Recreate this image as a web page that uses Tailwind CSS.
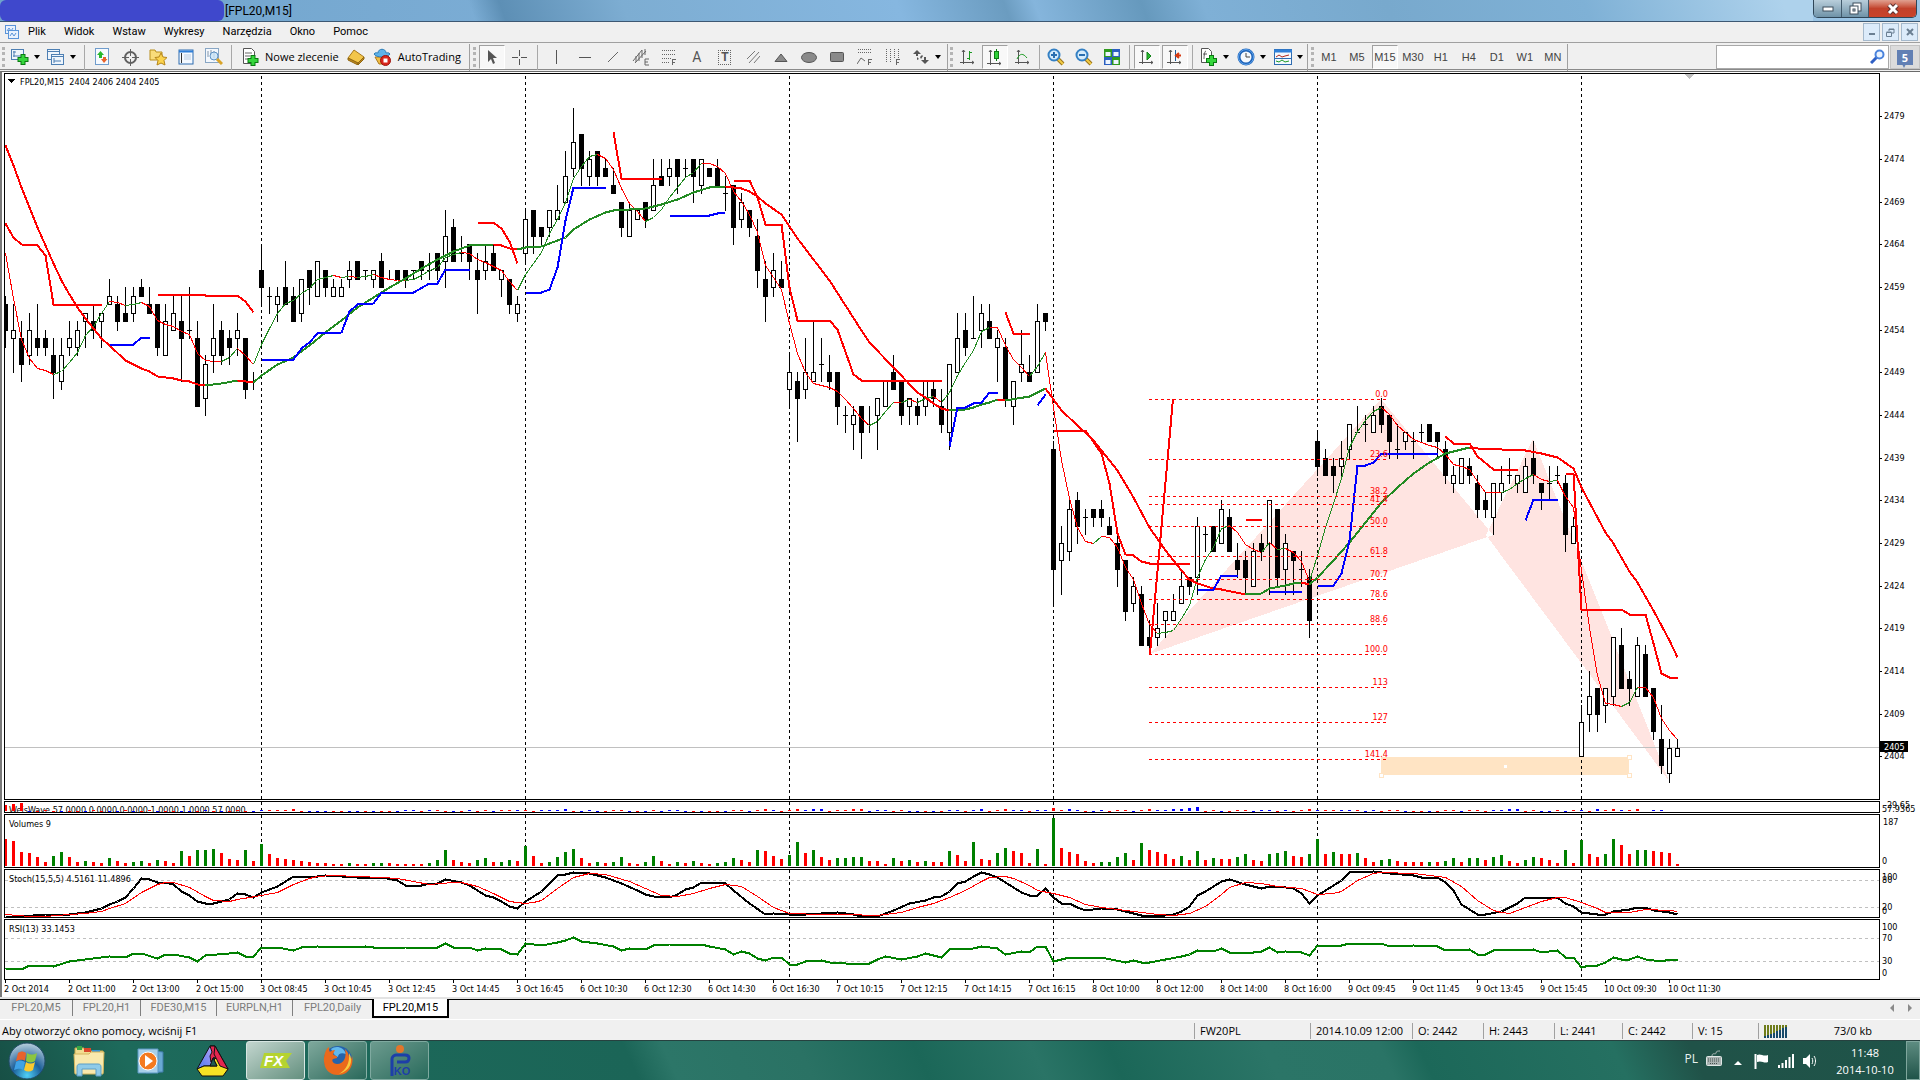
<!DOCTYPE html>
<html lang="pl">
<head>
    <meta charset="UTF-8">
    <meta name="viewport" content="width=device-width, initial-scale=1.0">
    <title>[FPL20,M15]</title>
    <script src="https://cdn.jsdelivr.net/npm/@tailwindcss/browser@4"></script>
</head>
<body class="h-screen flex flex-col overflow-hidden bg-[#f0f0f0] text-black font-['Open_Sans','Noto_Sans',sans-serif] text-[11px] leading-4">

    <!-- Title bar -->
    <header class="h-[22px] shrink-0 flex items-start border-b border-[#3d5873] bg-linear-to-r from-[#6fa3cb] via-[#86b5dd] to-[#9cc6e6]">
        <div class="w-56 h-[21px] rounded-[6px] bg-[#3f48cc]"></div>
        <h1 class="pl-px text-xs leading-[22px] font-['Roboto',sans-serif]">[FPL20,M15]</h1>
        <div class="flex-1 h-[21px] bg-[linear-gradient(70deg,transparent_12%,#5d8fb5_14%,#7dadd2_22%,#86b7e0_40%,#6b9cc0_47%,#85b5dc_49%,#6699bd_56%,#7fb0d6_60%,#78a9cd_72%,#7fb1d6_85%,#aed2ec_98%)]"></div>
        <div class="flex h-[18px] mr-[3px] rounded-b-[5px] border border-t-0 border-[#2f4658] overflow-hidden">
            <button aria-label="Minimalizuj" class="w-7 flex justify-center items-center bg-linear-to-b from-[#b9cedb] to-[#6f93a8] border-r border-[#41596b]">
                <svg width="12" height="6"><rect x="1" y="1" width="10" height="4" fill="#fff" stroke="#3f4f5c"/></svg>
            </button>
            <button aria-label="Przywróć" class="w-[27px] flex justify-center items-center bg-linear-to-b from-[#b9cedb] to-[#6f93a8] border-r border-[#41596b]">
                <svg width="13" height="13" fill="#fff" stroke="#3f4f5c"><rect x="4" y="1" width="8" height="8"/><rect x="1" y="4" width="8" height="8"/><rect x="4" y="7" width="2" height="2"/></svg>
            </button>
            <button aria-label="Zamknij" class="w-[47px] flex justify-center items-center bg-linear-to-b from-[#e0a090] via-[#c2412b] to-[#c9432a]">
                <svg width="14" height="12"><path d="M3 2l8 8M11 2l-8 8" stroke="#5b3030" stroke-width="5"/><path d="M3 2l8 8M11 2l-8 8" stroke="#fff" stroke-width="3"/></svg>
            </button>
        </div>
    </header>

    <!-- Menu -->
    <nav class="h-5 shrink-0 flex items-center bg-[#f0f0f0]">
        <svg class="ml-1 mr-2" width="16" height="16" fill="#e9f2fd" stroke="#5a94d8"><rect x="1.500" y="1.500" width="10" height="8"/><path d="M3 7l2-3 2 3 2-3" fill="none"/><rect x="4.500" y="6.500" width="10" height="8"/><path d="M6 12l2-3 2 3 2-3" fill="none"/></svg>
        <div class="flex gap-[18px] font-['Roboto',sans-serif]">
            <button>Plik</button>
            <button>Widok</button>
            <button>Wstaw</button>
            <button>Wykresy</button>
            <button>Narzędzia</button>
            <button>Okno</button>
            <button>Pomoc</button>
        </div>
        <div class="flex gap-0.5 ml-auto mr-0.5">
            <button aria-label="Minimalizuj wykres" class="w-[17px] h-[18px] flex justify-center items-center border border-[#a5b9cc] bg-[#dcebfa]"><svg width="8" height="8"><path d="M1 6h6" stroke="#6b7f92" stroke-width="2"/></svg></button>
            <button aria-label="Przywróć wykres" class="w-[17px] h-[18px] flex justify-center items-center border border-[#a5b9cc] bg-[#dcebfa]"><svg width="9" height="9" fill="none" stroke="#6b7f92"><path d="M3 3V1h5v4H6M3 1.500h5"/><path d="M.5 4.500h5v4h-5zM.5 4h5"/></svg></button>
            <button aria-label="Zamknij wykres" class="w-[17px] h-[18px] flex justify-center items-center border border-[#a5b9cc] bg-[#dcebfa]"><svg width="8" height="8"><path d="M1 1l6 6M7 1l-6 6" stroke="#6b7f92" stroke-width="2"/></svg></button>
        </div>
    </nav>

    <!-- Toolbars -->
    <div class="h-[28px] shrink-0 flex items-center pt-0.5 border-t border-[#a0a0a0] border-b border-b-[#8a8a8a] bg-[#f0f0f0]">
        <div class="w-1 h-5 ml-0.5 mr-0.5 border-l-[3px] border-dotted border-[#b4b4b4]"></div>
        <button aria-label="Nowy wykres" class="w-9 h-6 pl-[3px] flex items-center gap-[5px]">
            <svg width="18" height="18"><rect x=".5" y="1.500" width="12" height="10" fill="#eef5fc" stroke="#4d7fb3"/><path d="M3 3v6M2 4h3M2 8h8" stroke="#4d7fb3"/><path d="M12 6v11M6.500 11.500h11" stroke="#0a7a12" stroke-width="5"/><path d="M12 7v9M7.500 11.500h9" stroke="#35d63c" stroke-width="3"/></svg>
            <svg width="6" height="4"><path d="M0 0h6L3 4z"/></svg>
        </button>
        <button aria-label="Profile" class="w-[37px] h-6 pl-[3px] flex items-center gap-[5px]">
            <svg width="18" height="18" fill="#eef5fc" stroke="#4d7fb3"><rect x=".5" y="1.500" width="12" height="10"/><path d="M.5 3.500h12"/><rect x="4.500" y="6.500" width="12" height="10"/><path d="M4.500 8.500h12M7 10v5M7 13h7"/></svg>
            <svg width="6" height="4"><path d="M0 0h6L3 4z"/></svg>
        </button>
        <div class="w-px h-[25px] mx-[3px] bg-[#a8a8a8]"></div>
        <button aria-label="Rynek" class="w-7 h-6 flex justify-center items-center"><svg width="14" height="18"><rect x=".5" y=".5" width="13" height="16" fill="#f6faff" stroke="#6f9ccc"/><path d="M5.500 3l3.500 4H7v3H4V7H2z" fill="#27b82d"/><path d="M9 15l3.500-4H11V9H8v2H6z" fill="#e8622a"/></svg></button>
        <button aria-label="Dane" class="w-7 h-6 flex justify-center items-center"><svg width="17" height="17" fill="none" stroke="#606060" stroke-width="2"><circle cx="8.500" cy="8.500" r="5.500"/><path d="M8.500 0v7M8.500 10v7M0 8.500h7M10 8.500h7" stroke-width="1"/></svg></button>
        <button aria-label="Nawigator" class="w-7 h-6 flex justify-center items-center"><svg width="18" height="18"><path d="M1 2h5l1 2h6v8H1z" fill="#f9dc7a" stroke="#b98f1c"/><path d="M12 5l2 4 4 .5-3 3 1 4.500-4-2-4 2 1-4.500-3-3 4-.5z" fill="#fbd34d" stroke="#b5851a"/></svg></button>
        <button aria-label="Terminal" class="w-7 h-6 flex justify-center items-center"><svg width="16" height="16"><rect x="1" y="1" width="14" height="14" fill="#f4f9ff" stroke="#2e6cb0"/><path d="M1 2.500h14" stroke="#2f7fd8" stroke-width="2"/><path d="M3.500 4v10" stroke="#303030"/><path d="M6 6h7M6 8h7M6 10h7" stroke="#b9cbe0"/></svg></button>
        <button aria-label="Tester" class="w-7 h-6 flex justify-center items-center"><svg width="18" height="18"><rect x=".5" y=".5" width="13" height="14" fill="#f4f8fd" stroke="#88a6c4"/><path d="M3 3v6M6 2v5M9 3v7" stroke="#8296aa"/><circle cx="9" cy="8" r="4" fill="#c9e3f8cc" stroke="#5f92c4"/><path d="M12 11l5 5" stroke="#d9a429" stroke-width="3"/></svg></button>
        <div class="w-px h-[25px] mx-[3px] bg-[#a8a8a8]"></div>
        <button class="h-6 pl-[7px] flex items-center gap-1.5">
            <svg width="17" height="18"><path d="M1.500.5h8l3 3v12h-11z" fill="#fff" stroke="#555"/><path d="M3 5h7M3 8h5M3 11h4" stroke="#666"/><path d="M11 7v11M5.500 12.500h11" stroke="#0a7a12" stroke-width="5"/><path d="M11 8v9M6.500 12.500h9" stroke="#35d63c" stroke-width="3"/></svg>
            <span>Nowe zlecenie</span>
        </button>
        <button aria-label="MetaEditor" class="w-7 h-6 ml-[3px] flex justify-center items-center"><svg width="18" height="16"><path d="M1 9l6-8 10 7-6 6z" fill="#f3c64a" stroke="#a9791b"/><path d="M1 9v2l10 5v-2zM11 16l6-6V8l-6 6z" fill="#c08a1e" stroke="#8f6611"/></svg></button>
        <button class="h-6 ml-[3px] flex items-center gap-[7px]">
            <svg width="18" height="18"><path d="M2 9h14l-3 7H6z" fill="#f2bd42" stroke="#a9791b"/><path d="M1 6c2 4 14 4 16 0-1-2-4-1-4-1 0-5-8-5-8 0 0 0-3-1-4 1z" fill="#5fb2e8" stroke="#2c7db8"/><circle cx="12.500" cy="12.500" r="5" fill="#d8261c" stroke="#9c130c"/><rect x="10.500" y="10.500" width="4" height="4" fill="#fff"/></svg>
            <span>AutoTrading</span>
        </button>
        <div class="w-px h-[27px] ml-2 mr-[3px] bg-[#a0a0a0]"></div>
        <div class="w-1 h-5 border-l-[3px] border-dotted border-[#b4b4b4]"></div>
        <button aria-label="Kursor" class="w-[26px] h-6 ml-[2px] mr-px flex justify-center items-center border border-[#a0a0a0] border-r-white border-b-white bg-[#f8f8f8]"><svg width="10" height="16"><path d="M1 1v12l3-3 2 5 2-1-2-5h4z" fill="#555"/></svg></button>
        <button aria-label="Krzyż" class="w-7 h-6 flex justify-center items-center"><svg width="15" height="15" stroke="#555"><path d="M7.500 0v6M7.500 9v6M0 7.500h6M9 7.500h6"/></svg></button>
        <div class="w-px h-[25px] ml-[3px] mr-1 bg-[#a8a8a8]"></div>
        <button aria-label="Linia pionowa" class="w-7 h-6 ml-px flex justify-center items-center"><svg width="3" height="14" stroke="#555"><path d="M1.500 0v14"/></svg></button>
        <button aria-label="Linia pozioma" class="w-7 h-6 flex justify-center items-center"><svg width="12" height="3" stroke="#555"><path d="M0 1.500h12"/></svg></button>
        <button aria-label="Linia trendu" class="w-7 h-6 flex justify-center items-center"><svg width="12" height="12" stroke="#666"><path d="M1 11L11 1"/></svg></button>
        <button aria-label="Kanał" class="w-7 h-6 flex justify-center items-center"><svg width="18" height="18" stroke="#666"><path d="M1 13L10 2M3 15L14 3M4 8v6M7 5v8M10 2v8M13 1v6"/><path d="M17 11h-4v6h4M13 14h3" fill="none"/></svg></button>
        <button aria-label="Fibonacci" class="w-7 h-6 flex justify-center items-center"><svg width="16" height="18" stroke="#666"><path d="M1 2.500h14M1 6.500h14M1 10.500h9M1 14.500h7" stroke-dasharray="1 1"/><path d="M15 11.500h-4M11.500 11v6M11 14.500h3" fill="none"/></svg></button>
        <button class="w-7 h-6 text-center text-sm text-[#555] font-['Roboto',sans-serif]">A</button>
        <button class="w-7 h-6 flex justify-center items-center text-[#555]"><span class="w-[13px] h-[15px] border border-dotted border-[#666] text-xs leading-[13px] font-bold text-center font-['Liberation_Sans',sans-serif]">T</span></button>
        <button aria-label="Linie równoległe" class="w-7 h-6 flex justify-center items-center"><svg width="14" height="14" stroke="#777"><path d="M1 9L9 1M3 13L13 2M8 13l6-7"/></svg></button>
        <button aria-label="Trójkąt" class="w-7 h-6 flex justify-center items-center"><svg width="14" height="9"><path d="M1 8.500L7 1l6 7.500z" fill="#8a8a8a" stroke="#555"/></svg></button>
        <button aria-label="Elipsa" class="w-7 h-6 flex justify-center items-center"><svg width="16" height="11"><ellipse cx="8" cy="5.500" rx="7.500" ry="5" fill="#8a8a8a" stroke="#555"/></svg></button>
        <button aria-label="Prostokąt" class="w-7 h-6 flex justify-center items-center"><svg width="14" height="10"><rect x=".5" y=".5" width="13" height="9" rx="1" fill="#8a8a8a" stroke="#555"/></svg></button>
        <button aria-label="Wachlarz" class="w-7 h-6 flex justify-center items-center"><svg width="16" height="18" stroke="#666" fill="none"><path d="M1 1.500h14M1 4.500h14" stroke-dasharray="1 1"/><path d="M0 16l4-6 4 3M15 11.500h-4M11.500 11v6M11 14.500h3"/></svg></button>
        <button aria-label="Strefy" class="w-7 h-6 flex justify-center items-center"><svg width="15" height="18" stroke="#666" fill="none"><path d="M1.500 1v14M5.500 1v14M9.500 1v9M13.500 1v9" stroke-dasharray="1 1"/><path d="M15 11.500h-4M11.500 11v6M11 14.500h3"/></svg></button>
        <button aria-label="Strzałki" class="w-10 h-6 pl-[6px] flex items-center gap-1.5">
            <svg width="16" height="14" fill="#555"><path d="M4 0l4 4H5v2H3V4H0zM7 7l2-2 1 1-2 3zM12 14l-4-4h3V7h2v3h3zM4 7l2 2-2 1z"/></svg>
            <svg width="6" height="4"><path d="M0 0h6L3 4z" fill="#000"/></svg>
        </button>
        <div class="w-px h-[27px] mr-0.5 bg-[#a0a0a0]"></div>
        <div class="w-1 h-5 border-l-[3px] border-dotted border-[#b4b4b4]"></div>
        <button aria-label="Słupki" class="w-[27px] h-6 flex justify-center items-center"><svg width="15" height="16" fill="none" stroke="#555"><path d="M3.500 1v14M0 13.500h14M2 3l1.500-2L5 3M12 12l2 1.500-2 1.500"/><path d="M9.500 2v9M7 9.500h2M10 3.500h2" stroke="#1b9a22"/></svg></button>
        <button aria-label="Świece" class="w-[26px] h-6 mx-px flex justify-center items-center border border-[#a0a0a0] border-r-white border-b-white bg-[#f8f8f8]"><svg width="15" height="17" fill="none" stroke="#555"><path d="M3.500 1v15M0 14.500h14M2 3l1.500-2L5 3M12 13l2 1.500-2 1.500"/><path d="M9.500 0v12" stroke="#0d7d14"/><rect x="7.500" y="2.500" width="4" height="7" fill="#2fd038" stroke="#0d7d14"/></svg></button>
        <button aria-label="Linia" class="w-7 h-6 flex justify-center items-center"><svg width="15" height="16" fill="none" stroke="#555"><path d="M3.500 1v14M0 13.500h14M2 3l1.500-2L5 3M12 12l2 1.500-2 1.500"/><path d="M2 10c3-6 6-6 10-1" stroke="#1b9a22"/></svg></button>
        <div class="w-px h-[25px] mx-[2px] bg-[#a8a8a8]"></div>
        <button aria-label="Powiększ" class="w-7 h-6 flex justify-center items-center"><svg width="18" height="18"><path d="M10 10l6 6" stroke="#9a741b" stroke-width="4"/><path d="M10 10l6 6" stroke="#f2cc45" stroke-width="2"/><circle cx="7" cy="7" r="5.500" fill="#d6ecfb" stroke="#3480c4" stroke-width="2"/><path d="M7 4v6M4 7h6" stroke="#2a6fb0" stroke-width="2"/></svg></button>
        <button aria-label="Pomniejsz" class="w-7 h-6 flex justify-center items-center"><svg width="18" height="18"><path d="M10 10l6 6" stroke="#9a741b" stroke-width="4"/><path d="M10 10l6 6" stroke="#f2cc45" stroke-width="2"/><circle cx="7" cy="7" r="5.500" fill="#d6ecfb" stroke="#3480c4" stroke-width="2"/><path d="M4 7h6" stroke="#2a6fb0" stroke-width="2"/></svg></button>
        <button aria-label="Kafelki" class="w-7 h-6 flex justify-center items-center"><svg width="16" height="16"><path d="M0 0h8v8H0zM8 8h8v8H8z" fill="#2f9a1e"/><path d="M8 0h8v8H8zM0 8h8v8H0z" fill="#2b5fc0"/><path d="M1.500 3h5v4h-5zM9.500 3h5v4h-5zM1.500 11h5v4h-5zM9.500 11h5v4h-5z" fill="#eef6ff"/></svg></button>
        <div class="w-px h-[25px] mx-[3px] bg-[#a8a8a8]"></div>
        <button aria-label="Autoprzewijanie" class="w-[26px] h-6 mx-px flex justify-center items-center border border-[#a0a0a0] border-r-white border-b-white bg-[#f8f8f8]"><svg width="15" height="16" fill="none" stroke="#555"><path d="M3.500 1v14M0 13.500h14M2 3l1.500-2L5 3M12 12l2 1.500-2 1.500"/><path d="M8 3l4 4-4 4z" fill="#28b82e" stroke="#118217"/></svg></button>
        <button aria-label="Przesunięcie" class="w-[26px] h-6 mx-px flex justify-center items-center border border-[#a0a0a0] border-r-white border-b-white bg-[#f8f8f8]"><svg width="15" height="16" fill="none" stroke="#555"><path d="M3.500 1v14M0 13.500h14M2 3l1.500-2L5 3M12 12l2 1.500-2 1.500"/><path d="M8.500 1v11" stroke="#1c5c9c"/><path d="M14 6.500H9M12 4L9 6.500 12 9" stroke="#d63a12" stroke-width="2"/></svg></button>
        <div class="w-px h-[25px] mx-[3px] bg-[#a8a8a8]"></div>
        <button aria-label="Wskaźniki" class="w-[37px] h-6 pl-1 flex items-center gap-[5px]">
            <svg width="18" height="18"><path d="M1.500.5h7l3 3v11h-10z" fill="#fff" stroke="#555"/><path d="M6 3c-2 0-2 8-2 8M3 6h4" stroke="#555" fill="none"/><path d="M11.500 7v11M6 12.500h11" stroke="#0a7a12" stroke-width="5"/><path d="M11.500 8v9M7 12.500h9" stroke="#35d63c" stroke-width="3"/></svg>
            <svg width="6" height="4"><path d="M0 0h6L3 4z"/></svg>
        </button>
        <button aria-label="Okresy" class="w-[37px] h-6 pl-1 flex items-center gap-[5px]">
            <svg width="18" height="18"><circle cx="9" cy="9" r="7" fill="#f4f8fd" stroke="#1d62b8" stroke-width="3"/><circle cx="9" cy="9" r="7.500" fill="none" stroke="#5fa4ec"/><path d="M9 5v4h4" fill="none" stroke="#444"/></svg>
            <svg width="6" height="4"><path d="M0 0h6L3 4z"/></svg>
        </button>
        <button aria-label="Szablony" class="w-[37px] h-6 pl-1 flex items-center gap-[5px]">
            <svg width="18" height="16"><rect x=".5" y=".5" width="17" height="15" fill="#f4f9ff" stroke="#2e6cb0"/><path d="M0 2h18" stroke="#2f7fd8" stroke-width="3"/><path d="M2 8l3-2 3 2 3-1 4-1" stroke="#b3281c" fill="none"/><path d="M0 9.500h18" stroke="#2e6cb0"/><path d="M2 12l3 1 3-2 3 2 4-1" stroke="#1b9a22" fill="none"/></svg>
            <svg width="6" height="4"><path d="M0 0h6L3 4z"/></svg>
        </button>
        <div class="w-px h-[27px] mr-[3px] bg-[#a0a0a0]"></div>
        <div class="w-1 h-5 border-l-[3px] border-dotted border-[#b4b4b4]"></div>
        <div class="flex text-[#444] font-['Liberation_Sans',sans-serif]">
            <button class="w-7 h-6">M1</button>
            <button class="w-7 h-6">M5</button>
            <button class="w-[26px] h-6 mx-px border border-[#a0a0a0] border-r-white border-b-white bg-[#f8f8f8]">M15</button>
            <button class="w-7 h-6">M30</button>
            <button class="w-7 h-6">H1</button>
            <button class="w-7 h-6">H4</button>
            <button class="w-7 h-6">D1</button>
            <button class="w-7 h-6">W1</button>
            <button class="w-7 h-6">MN</button>
        </div>
        <div class="w-px h-[27px] bg-[#a0a0a0]"></div>
        <div class="relative ml-auto">
            <input aria-label="Szukaj" type="text" class="block w-[173px] h-6 bg-white border border-[#a9a9a9] pl-1 pr-6">
            <svg class="absolute right-1 top-1" width="15" height="15"><path d="M7 8l-6 6" stroke="#2f5fc4" stroke-width="3"/><circle cx="9.500" cy="5.500" r="4" fill="#eaf3ff" stroke="#4a83dc" stroke-width="2"/></svg>
        </div>
        <button aria-label="Wiadomości" class="w-[30px] h-6 ml-px flex justify-center items-center bg-[#dcdcdc] border border-[#c4c4c4]">
            <span class="relative w-4 h-[15px] bg-[#6280b4] text-white text-[11px] leading-[15px] font-bold text-center">5<svg class="absolute left-1 top-3" width="6" height="6"><path d="M0 0h6L3 6z" fill="#6280b4"/></svg></span>
        </button>
    </div>

    <!-- Chart window -->
    <main class="flex-1 min-h-0 flex flex-col mt-px pt-px pl-0.5 border-l-2 border-l-[#7a7a7a] border-t border-t-[#6a6a6a] bg-white font-['DejaVu_Sans_Condensed','Noto_Sans',sans-serif]">
        <div class="flex-1 min-h-0 flex flex-col gap-px">
            <section class="flex-1 min-h-0 flex">
                <svg id="price" class="flex-1 min-w-0 h-full border border-black" shape-rendering="crispEdges"></svg>
                <svg id="priceAxis" class="w-10 h-full shrink-0"></svg>
            </section>
            <section class="h-3 shrink-0 flex">
                <svg id="weis" class="flex-1 min-w-0 h-full border border-black" shape-rendering="crispEdges"></svg>
                <svg id="weisAxis" class="w-10 h-full shrink-0 overflow-visible"></svg>
            </section>
            <section class="h-[54px] shrink-0 flex">
                <svg id="volume" class="flex-1 min-w-0 h-full border border-black" shape-rendering="crispEdges"></svg>
                <svg id="volumeAxis" class="w-10 h-full shrink-0 overflow-visible"></svg>
            </section>
            <section class="h-[49px] shrink-0 flex">
                <svg id="stoch" class="flex-1 min-w-0 h-full border border-black" shape-rendering="crispEdges"></svg>
                <svg id="stochAxis" class="w-10 h-full shrink-0 overflow-visible"></svg>
            </section>
            <section class="h-[61px] shrink-0 flex">
                <svg id="rsi" class="flex-1 min-w-0 h-full border border-black" shape-rendering="crispEdges"></svg>
                <svg id="rsiAxis" class="w-10 h-full shrink-0"></svg>
            </section>
        </div>
        <svg id="timeAxis" class="w-full h-[17px] shrink-0"></svg>
    </main>

    <!-- Chart tabs -->
    <div class="h-[22px] shrink-0 flex items-start border-t-2 border-t-[#e3e3e3]">
        <div class="flex-1 h-5 flex items-start border-t border-black text-[#7b7b7b] font-['Roboto',sans-serif]">
            <button class="w-[73px] h-4 border-r border-[#808080]">FPL20,M5</button>
            <button class="w-[68px] h-4 border-r border-[#808080]">FPL20,H1</button>
            <button class="w-[76px] h-4 border-r border-[#808080]">FDE30,M15</button>
            <button class="w-[76px] h-4 border-r border-[#808080]">EURPLN,H1</button>
            <button class="w-[79px] h-4">FPL20,Daily</button>
            <button class="w-[77px] h-[19px] -mt-px bg-white border-2 border-t-0 border-black text-black">FPL20,M15</button>
            <div class="ml-auto mr-2 mt-1 flex gap-3">
                <button aria-label="Poprzednia"><svg width="5" height="8"><path d="M4 0v8L0 4z" fill="#8a8a8a"/></svg></button>
                <button aria-label="Następna"><svg width="5" height="8"><path d="M1 0v8l4-4z" fill="#8a8a8a"/></svg></button>
            </div>
        </div>
    </div>

    <!-- Status bar -->
    <footer class="h-[21px] shrink-0 flex items-center pt-0.5 border-t border-white">
        <div class="flex-1 pl-0.5">Aby otworzyć okno pomocy, wciśnij F1</div>
        <div class="w-[116px] pl-[5px] border-l border-[#a0a0a0]">FW20PL</div>
        <div class="w-[102px] pl-[5px] border-l border-[#a0a0a0] whitespace-nowrap">2014.10.09 12:00</div>
        <div class="w-[71px] pl-[5px] border-l border-[#a0a0a0]">O: 2442</div>
        <div class="w-[71px] pl-[5px] border-l border-[#a0a0a0]">H: 2443</div>
        <div class="w-[68px] pl-[5px] border-l border-[#a0a0a0]">L: 2441</div>
        <div class="w-[70px] pl-[5px] border-l border-[#a0a0a0]">C: 2442</div>
        <div class="w-[66px] pl-[5px] border-l border-[#a0a0a0]">V: 15</div>
        <div class="w-[162px] pl-[5px] pr-12 flex justify-between border-l border-[#a0a0a0]">
            <svg class="mt-0.5" width="24" height="13" shape-rendering="crispEdges"><path d="M1 0v11M4 0v10M7 0v9M10 0v8M13 0v6M16 0v5M19 0v3M22 0v2" stroke="#6f7d1b" stroke-width="2"/><path d="M1 11v2M4 10v3M7 9v4M10 8v5M13 6v7M16 5v8M19 3v10M22 2v11" stroke="#174a6b" stroke-width="2"/></svg>
            <span>73/0 kb</span>
        </div>
    </footer>

    <!-- Taskbar -->
    <div class="h-10 shrink-0 flex items-stretch border-t border-t-[#26413f] text-white bg-[linear-gradient(65deg,#174f45_0%,#1d6a5b_7%,#1b6557_33%,#2c7668_35%,#2a7264_42%,#1b6758_48%,#2a7466_54%,#1b6758_58%,#2b7567_66%,#2a7466_72%,#1c6859_74%,#257061_84%,#205248_88%,#1f5449_100%)]">
        <button aria-label="Start" class="w-[54px] flex justify-center items-center">
            <svg width="38" height="38"><defs><radialGradient id="orb" cx=".5" cy=".9" r=".9"><stop offset="0" stop-color="#4fd0f5"/><stop offset=".45" stop-color="#1c5f9a"/><stop offset="1" stop-color="#b9cfdc"/></radialGradient></defs><circle cx="19" cy="19" r="18" fill="url(#orb)" stroke="#204b66"/><path d="M10 11c3-2 5-2 8 0l-1 8c-3-2-5-1-9 0z" fill="#e8622c"/><path d="M19 11c3 2 6 2 10 0l-2 8c-3 2-6 2-9 0z" fill="#8cc63f"/><path d="M8 20c3-2 5-2 9 0l-2 8c-3-2-5-1-9 0z" fill="#3fa2e6"/><path d="M18 20c3 2 6 2 9 0l-2 8c-3 2-6 2-9 0z" fill="#fbc92e"/></svg>
        </button>
        <button aria-label="Eksplorator" class="w-[69px] flex justify-center items-center">
            <svg width="34" height="32"><path d="M3 3h9l2 3h17v22H3z" fill="#f2dd90" stroke="#c8a94d"/><path d="M5 1h5v4H5z" fill="#39a845"/><path d="M12 3h7v4h-7z" fill="#d9482b"/><path d="M20 5h8v4h-8z" fill="#3b93d4"/><path d="M2 9h15l2-2h13l-1 22H3z" fill="#f8e9ad" stroke="#d4b65e"/><path d="M5 31v-9c0-2 1-3 3-3h18c2 0 3 1 3 3v9h-5v-7H10v7z" fill="#8fcbe9" stroke="#5c9ec6"/></svg>
        </button>
        <button aria-label="Odtwarzacz" class="w-14 flex justify-center items-center">
            <svg width="28" height="28"><path d="M9 3l17 2v20l-17 1z" fill="#6aa9d4" stroke="#3f7ba8"/><path d="M1 2h20v24H1z" fill="#a8d0ea" stroke="#5b98c4"/><circle cx="11" cy="14" r="9" fill="#f47a1f" stroke="#fff"/><path d="M8 8l8 6-8 6z" fill="#fff"/></svg>
        </button>
        <button aria-label="Program" class="w-[67px] flex justify-center items-center">
            <svg width="34" height="32"><defs><linearGradient id="edge" x1="0" y1="1" x2="1" y2="0"><stop offset="0" stop-color="#4a78f0"/><stop offset="1" stop-color="#c9a9f7"/></linearGradient></defs><path d="M14 1h5l4 9-4 3-4 8H8l-7 3z" fill="url(#edge)" stroke="#111"/><path d="M14 1h5l13 23-5 6-9-18-3 5-1-6 2-4z" fill="#e5264f" stroke="#111"/><path d="M1 24l7-3h13l-3-6 3-3 11 12-5 7H6z" fill="#f5e324" stroke="#111"/><path d="M19 1l13 23-8-3-6-12z" fill="#e5264f" stroke="#111"/><path d="M17 13l4 8h-7z" fill="#1f5d51" stroke="#111"/></svg>
        </button>
        <button aria-label="FX" class="w-[59px] flex justify-center items-center rounded-[3px] border border-[#d7e6e2] bg-linear-to-br from-[#c3d6cf] to-[#64907f]">
            <svg width="32" height="16"><path d="M4 0h28l-6 8 4 7H0z" fill="#b5d330"/><text x="4" y="13" font-family="Liberation Sans" font-size="15" font-weight="bold" font-style="italic" fill="#fff">FX</text></svg>
        </button>
        <button aria-label="Firefox" class="w-[59px] ml-[3px] flex justify-center items-center rounded-[3px] border border-[#86b0a6] bg-linear-to-br from-[#7ea89c] to-[#28695b]">
            <svg width="32" height="34"><circle cx="16" cy="16" r="14" fill="#2563ab"/><path d="M9 5c5-4 13-2 15 5-5-2-8 0-8 3-3-1-5-4-7-8z" fill="#62b8ec"/><path d="M3 9c-3 9 0 22 13 22 12 0 16-11 14-19-1 4-2 5-3 5 1-6-2-10-4-12 2 8-1 15-8 15-3 0-6-3-4-5l4-1c1-3-4-2-4-4l2-4c-3 0-4 1-5 2-1-1-1-4-1-5-2 1-3 3-4 6z" fill="#ea6a1c"/><path d="M27 9c5 8 1 18-10 21 7-4 11-11 10-21z" fill="#f9c93c"/></svg>
        </button>
        <button aria-label="PKO" class="w-[59px] ml-[3px] flex flex-col items-center rounded-[3px] border border-[#7faaa0] bg-linear-to-br from-[#6c9b8f] to-[#276b5c]">
            <svg width="24" height="36"><circle cx="12" cy="7" r="4" fill="#e2762a"/><path d="M4 34V17c0-2 2-4 4-4h9c3 0 4 1 4 3s-1 4-4 4H9" fill="none" stroke="#1d3fa8" stroke-width="3"/><text x="14" y="33" text-anchor="middle" font-family="Liberation Sans" font-size="11" font-weight="bold" fill="#1d3fa8">KO</text></svg>
        </button>
        <div class="ml-auto flex items-center text-xs">
            <span class="mb-1 mr-2 text-[#e8f2f0]">PL</span>
            <button aria-label="Klawiatura" class="mb-1 w-4"><svg width="16" height="17"><path d="M6 6c0-4 4-1 4-3s2-2 4-2" stroke="#a9b6b4" fill="none"/><rect x=".5" y="6.500" width="15" height="9" rx="1" fill="#aab3b2" stroke="#dfe7e5"/><path d="M2 9h12M2 11h12M4 13.500h8" stroke="#44524f" stroke-dasharray="1 1"/></svg></button>
            <button aria-label="Pokaż ukryte ikony" class="ml-3 mt-1"><svg width="8" height="5"><path d="M0 5l4-4 4 4z" fill="#fff"/></svg></button>
            <button aria-label="Centrum akcji" class="ml-3"><svg width="16" height="18"><path d="M1.500 2v15" stroke="#fff" stroke-width="2"/><path d="M3 3c4-2 6 2 11 0v7c-4 2-6-2-11 0z" fill="#fff"/></svg></button>
            <button aria-label="Sieć" class="ml-2"><svg width="16" height="14" fill="#fff"><path d="M0 11h2v3H0zM3.500 9h2v5h-2zM7 6h2v8H7zM10.500 3h2v11h-2zM14 0h2v14h-2z"/></svg></button>
            <button aria-label="Głośność" class="ml-2"><svg width="16" height="16"><path d="M1 5h3l4-4v14l-4-4H1z" fill="#fff"/><path d="M10 5c1 2 1 4 0 6M12 3c2 3 2 7 0 10" stroke="#fff" fill="none"/></svg></button>
            <div class="w-[82px] ml-1.5 text-center text-[11px] leading-[17px]">11:48<br>2014-10-10</div>
        </div>
        <button aria-label="Pokaż pulpit" class="w-3.5 border border-[#7fa69d] bg-linear-to-b from-[#5d8c81] to-[#1f5449]"></button>
    </div>

    <script>
        // drawing units are screen pixels, bars are 8px apart starting at x = 5
        const X = i => 5 + i * 8;
        const Y = p => Math.round(415 + (2444 - p) * 8.53);
        const DAYS = [32, 65, 98, 131, 164, 197];

        // high low open close, counted from 2400
        const candles = `58 52 57 54|57 49 53 54|55 48 53 50|56 50 51 54|57 51 53 52|54 51 53 52|53 46 51 49|53 47 48 51|55 51 52 53|55 51 52 54
56 52 55 56|57 53 55 54|56 52 55 56|60 57 57 58|58 54 57 55|59 55 56 55|59 55 56 58|60 58 59 58|59 56 57 56|57 51 57 52
57 51 51 55|58 54 54 56|58 48 55 53|59 53 54 54|55 45 53 45|51 44 46 50|57 49 51 53|55 50 54 51|54 50 53 52|56 51 53 54
53 46 53 47|49 47 48 48|64 57 61 59|59 56 58 58|59 55 57 58|62 57 59 57|59 55 58 55|60 55 56 60|61 57 61 59|62 58 58 62
61 58 61 59|60 58 58 59|60 58 58 59|62 59 60 61|62 60 62 60|61 60 61 61|61 59 60 61|63 59 62 59|61 60 60 60|61 60 61 60
61 59 61 60|61 60 61 61|62 60 62 61|63 60 61 61|63 60 63 61|68 59 62 65|67 62 66 62|65 62 63 63|64 60 64 62|63 56 61 60
64 60 61 62|64 61 63 61|61 58 60 61|60 56 60 57|58 55 56 57|68 62 63 67|68 63 68 65|66 64 66 65|68 65 66 68|71 67 67 68
75 69 69 72|80 72 73 76|77 71 77 73|75 71 72 74|75 71 75 72|74 72 73 72|73 70 71 70|69 65 69 66|69 65 65 68|68 67 67 68
69 66 69 67|74 68 68 71|74 71 72 71|74 71 72 73|74 70 74 72|74 72 73 73|74 69 74 72|74 70 71 74|73 72 73 72|74 71 73 71
72 68 70 70|71 64 71 66|70 66 67 69|68 65 68 66|67 59 65 61|62 55 60 58|63 58 59 61|62 59 60 59|51 45 47 49|49 41 48 46
53 46 47 49|55 48 48 49|53 48 50 50|51 47 49 48|49 43 49 45|45 42 44 44|45 40 43 44|45 39 45 42|45 42 43 43|46 40 44 46
48 45 45 48|51 47 49 47|48 43 48 44|46 43 45 46|46 43 45 44|48 44 45 48|48 45 47 46|47 42 45 43|50 40 42 50|56 49 49 53
56 51 54 52|58 53 53 53|57 52 54 56|57 53 55 53|54 48 52 53|53 45 52 46|48 43 45 48|54 48 49 50|51 48 49 48|57 49 49 55
56 54 56 55|41 22 40 26|31 23 27 29|34 27 28 33|35 29 34 31|33 30 32 32|33 31 33 32|34 31 33 32|32 30 31 30|30 24 29 26
27 20 27 21|25 21 22 24|24 17 23 17|20 16 18 17|22 17 18 19|21 18 20 21|23 20 20 21|26 22 22 24|25 23 25 24|32 23 25 31
31 28 30 30|31 28 31 28|34 29 29 33|33 28 32 28|29 25 27 26|28 23 27 25|29 24 24 28|30 27 29 28|34 23 29 34|33 24 33 25
30 23 26 29|28 23 28 27|28 24 26 26|26 18 25 20|42 37 41 38|40 37 39 37|39 35 38 37|41 37 38 39|43 39 40 43|45 42 42 42
44 41 43 43|45 42 42 44|46 42 45 43|44 39 44 41|43 39 40 40|42 40 41 42|42 39 41 41|43 41 42 42|43 41 43 41|42 39 42 41
41 36 40 37|38 35 36 37|39 36 36 39|39 36 38 37|37 32 36 33|35 32 34 33|36 30 32 36|38 34 35 36|39 36 37 37|37 35 36 37
39 35 35 38|41 36 39 37|36 33 36 35|38 34 36 36|38 36 37 37|37 28 36 30|32 29 29 31|10 4 4 8|14 7 9 11|12 7 12 9
12 8 10 12|18 10 11 18|19 12 17 12|14 10 13 12|18 11 11 17|17 11 16 11|12 6 12 7|10 2 6 3|6 1 2 5|6 4 4 5`
            .split(/[|\n]/).map(c => c.trim().split(" ").map(v => 2400 + Number(v)));

        // one y per bar
        const fast = [253,298,339,358,368,370,374,371,362,352,335,326,313,301,302,305,304,302,306,320,324,326,331,334,353,360,361,361,357,348,
            355,364,344,328,313,303,300,293,288,279,277,275,277,276,277,276,274,277,279,280,280,279,275,270,267,257,254,252,253,259,
            262,266,270,281,290,274,263,252,233,219,202,178,166,156,154,158,169,188,203,211,221,217,209,197,187,177,172,163,163,166,
            173,191,201,214,232,265,277,289,323,353,372,383,385,387,391,399,408,418,425,421,411,402,402,399,402,398,396,402,392,375,
            362,350,331,327,327,345,359,367,376,366,352,407,460,498,527,541,543,536,537,547,567,579,603,624,633,632,630,618,605,577,
            559,547,528,525,532,544,549,552,542,549,548,552,561,581,555,527,503,478,447,431,420,411,407,414,425,432,439,442,445,447,
            454,464,466,469,481,492,492,492,489,483,478,474,479,481,480,496,507,570,627,675,703,704,706,702,687,687,697,718,730,739]
            .map((y, i) => [i, y]);

        const slow = pairs("0 145 1 165 2 187 3 207 4 227 5 245 6 263 7 280 8 294 9 307 10 318 11 328 12 338 13 345 15 360 17 368 18 371 19 376 21 378 22 380 23 381 24 384 25 385 26 384 27 383 29 380 30 381 31 382 32 375 34 364 36 357 38 345 40 332 42 320 44 307 46 297 48 287 50 278 52 268 54 259 56 251 57 248 58 245 61 244 62 245 63 248 64 249 65 247 67 246 69 240 70 237 71 229 73 219 75 212 76 210 78 209 80 208 82 204 84 199 86 192 88 187 90 186 91 187 92 188 93 191 94 196 95 203 97 214 98 226 99 238 101 259 103 280 105 305 107 330 108 342 111 367 114 392 115 397 116 403 117 408 118 410 120 409 121 407 122 404 123 402 124 399 125 400 128 396 130 388 131 399 132 410 134 425 136 440 138 460 139 470 141 497 143 527 145 550 147 570 148 579 149 583 151 588 152 589 155 594 157 593 158 588 160 585 161 583 162 582 163 584 164 577 166 560 168 542 170 522 172 502 174 487 176 473 178 462 180 453 182 449 183 447 184 448 187 449 190 450 192 453 194 457 196 468 197 487 199 517 200 532 201 543 203 571 204 582 206 610 208 640 209 657");

        const redSteps = ["0 223 1 237 2 244 4 245 5 255 6 304 12 304", "19 294 24 294 25 295 29 295 30 301 31 312", "59 222 61 222 62 228 63 241 64 263",
            "76 132 77 178 82 178", "91 180 93 180 94 197 95 224 97 224 98 287 99 320 103 320 104 329 106 374 107 380 117 380", "125 312 126 333 128 333",
            "131 430 135 430 137 453 138 483 139 533 140 554 141 555 142 561 143 563 148 563", "155 519 157 519", "180 436 181 443 183 443 184 456 186 469 189 469",
            "195 473 196 473 197 609 202 609 203 614 205 614 206 643 207 673 208 677 209 677"];
        const blueSteps = ["13 344 16 344 17 337 18 337", "32 359 36 359 37 348 38 342 39 333 42 332 43 311 44 304 46 303 47 292 51 292 53 283 54 283 55 269 58 269",
            "65 292 67 292 68 289 69 267 70 220 71 187 75 187", "83 215 88 215 89 213 90 212", "118 446 119 407 120 407 121 403 122 402 123 392 124 392", "129 405 130 394",
            "149 589 151 589 152 575 154 575", "158 591 162 591", "164 585 166 585 167 573 168 540 169 465 170 465 171 462 172 453 179 453", "190 520 191 499 194 499"];

        const volumes = "R27 R25 R14 R13 R9 R4 G10 G14 R9 R4 G5 R4 R3 G8 R5 R3 G4 G5 R3 G6 R5 R3 G15 R10 G16 G16 G17 R13 R7 R6 G16 R5 G22 R12 R8 R7 R6 R5 R4 R3 R3 R2 R2 G3 R2 R2 G3 G3 R3 R2 R2 R2 R2 G3 G6 G16 R6 R4 R3 G6 G8 R4 G4 G6 R5 G20 R10 R3 G4 G9 G14 G17 R8 R3 G4 R3 G4 G9 R3 R2 G4 G10 R5 R2 G4 R3 G5 R3 R2 G3 G4 G8 R6 R4 G16 R15 R10 R7 G11 G24 R13 G16 R9 R6 G8 G8 G9 G9 R5 R5 R2 G8 R5 G6 R4 G5 R4 R4 G15 R11 R5 G24 R7 R6 G13 G18 R15 R13 R3 G17 R2 G48 R18 R14 R12 R5 R3 G4 G4 G9 G13 R6 G23 R16 R14 R12 R7 G10 R6 G15 R6 G8 R7 R7 G9 G12 R6 R5 G12 G13 G15 R10 R9 G12 G27 R12 G14 R12 R12 G13 R8 R4 G6 G7 R5 R4 R4 R4 G4 R4 G5 G8 R4 G8 G8 R6 G9 G11 R5 R3 G6 G9 R8 R6 R3 G16 R3 G26 R12 R9 G12 G27 R21 R12 G16 G16 R15 R14 R13 R2".split(" ");

        // wave direction and height of each bar
        const waves = "R7R8R9b1r1r2r1b1r1r1b1r2r1b1b1r2b1r1r2b1r1r1b1b1r1b2r1b1r1r2r1b1b2r2r2r2R3r1b1b1b1r1r1b1b1r1b1r1r1b1b2b2r1b2r2r1b1r1b2r1r2b1r2r2b2r2r1b2b2b2b3r1b1b2b1r1r2r2b1r1b1r2b1b2b2b1r1b1r1r1b1r2r2b1r2R3b2r1r2R3b2b3b3r1r2r2r3r3b1b2b2r1r2b1b1r1b1r1b2b2r1b2B3r1r2r3b2b2r1b2b2R4r2b3b2r1b1b2r1r2r2b1r2r3b2b2b3b3b4b5r1r2b1r1r2r2b1b2b2r1b2r1r2r3b2r2r2b2b2r2b1b2r1r2r2b1r1r1b1r1r2r2b1r2r2r1b2b2b3b3r1r2b1b1r2b1r2b2r1b3r2r3b2r2r3w1b2b2".match(/[RrBbw]\d/g);

        const stochMain = "0 916 2 916 5 914 8 914 10 912 12 908 13 904 14 901 15 897 16 888 17 878 18 879 19 882 20 882 21 884 22 891 23 895 24 901 25 903 26 903 27 901 28 899 29 893 30 894 31 897 32 892 33 889 34 886 35 881 36 876 39 876 40 875 42 876 44 877 47 877 49 880 50 885 52 885 53 883 54 883 55 879 57 882 58 885 60 895 61 897 62 901 63 906 64 908 65 901 67 891 68 883 69 875 70 874 71 872 73 873 75 877 77 883 79 890 80 894 81 896 83 897 84 894 85 889 86 887 87 882 89 882 90 883 91 890 93 903 95 914 96 913 98 914 100 914 102 913 104 912 106 914 107 916 109 916 111 910 113 903 115 900 116 897 117 896 118 891 119 883 120 881 121 876 122 872 123 874 124 877 125 882 127 892 128 895 129 895 130 888 131 897 132 903 133 903 134 907 135 910 137 908 139 909 141 913 142 915 143 916 145 915 146 914 147 911 148 906 149 895 150 891 152 881 153 879 155 884 157 888 158 886 160 887 161 888 162 893 163 903 164 895 166 885 167 880 168 872 171 871 173 873 176 875 177 877 179 877 180 882 181 890 182 904 184 914 185 914 187 911 189 903 190 897 194 897 195 903 196 906 197 912 199 914 200 914 201 911 203 909 204 907 205 907 206 910 208 912 209 914";
        const stochSignal = "0 914 3 916 5 916 8 914 10 913 12 911 13 908 15 903 17 892 19 884 20 882 21 882 23 887 25 896 26 900 28 901 29 899 32 895 34 892 36 884 38 878 39 876 41 875 44 876 47 877 49 878 51 881 53 884 56 882 57 882 59 886 61 893 63 901 65 903 66 902 67 900 69 888 71 877 73 873 75 874 78 881 80 888 82 895 84 896 86 893 88 888 90 884 92 886 94 896 96 907 98 913 102 914 105 914 109 915 112 912 114 907 116 903 118 897 120 890 122 881 123 877 125 876 126 878 128 885 129 890 131 893 133 897 135 904 137 907 140 910 142 912 144 914 146 915 148 913 150 906 152 894 153 887 155 882 157 883 159 886 162 888 164 894 166 893 167 891 169 880 171 873 172 872 176 873 178 875 180 877 182 886 184 900 186 910 187 912 188 913 190 907 192 901 194 897 195 897 197 902 199 908 200 912 203 912 205 909 208 910 209 911";
        const rsiLine = "0 968 2 969 3 965 5 965 6 966 8 961 10 959 12 957 13 956 15 957 16 953 17 953 19 958 20 954 21 954 23 957 24 961 25 955 28 953 29 952 30 956 31 956 32 947 34 947 36 950 37 947 39 946 41 947 45 946 47 948 50 947 54 947 55 943 56 947 58 947 59 950 60 948 62 949 63 953 64 954 65 943 67 945 69 942 70 940 71 937 72 941 74 943 76 946 77 950 78 948 80 949 81 945 83 944 87 944 88 946 90 949 91 954 92 951 93 953 94 958 95 960 96 957 97 957 98 964 99 964 100 961 102 960 103 962 107 964 108 963 109 959 110 956 112 959 114 956 115 953 117 957 118 949 121 948 122 946 124 948 125 954 127 951 128 952 129 946 130 946 131 961 133 957 137 957 140 962 141 960 142 962 143 962 145 959 147 956 148 954 149 950 151 951 152 948 153 952 155 953 157 951 158 947 159 952 160 951 162 952 163 955 164 945 167 945 168 943 172 943 173 946 176 945 179 946 180 950 183 949 184 954 185 954 186 950 191 949 192 952 194 950 195 957 196 957 197 967 198 965 199 965 200 962 201 957 202 959 203 959 204 956 205 959 207 961 208 959 209 959";

        const fibo = [["0.0", 399], ["23.6", 459], ["38.2", 496], ["41.4", 504], ["50.0", 526], ["61.8", 556], ["70.7", 579], ["78.6", 599], ["88.6", 624], ["100.0", 654], ["113", 687], ["127", 722], ["141.4", 759]];
        const times = ["2 Oct 2014", "2 Oct 11:00", "2 Oct 13:00", "2 Oct 15:00", "3 Oct 08:45", "3 Oct 10:45", "3 Oct 12:45", "3 Oct 14:45", "3 Oct 16:45", "6 Oct 10:30", "6 Oct 12:30", "6 Oct 14:30", "6 Oct 16:30", "7 Oct 10:15", "7 Oct 12:15", "7 Oct 14:15", "7 Oct 16:15", "8 Oct 10:00", "8 Oct 12:00", "8 Oct 14:00", "8 Oct 16:00", "9 Oct 09:45", "9 Oct 11:45", "9 Oct 13:45", "9 Oct 15:45", "10 Oct 09:30", "10 Oct 11:30"];

        function pairs(text) {
            const n = text.split(" ").map(Number);
            const out = [];
            for (let k = 0; k < n.length; k += 2) out.push([n[k], n[k + 1]]);
            return out;
        }

        function line(points, color, width) {
            return `<polyline points="${points.map(p => X(p[0]) + .5 + "," + (p[1] + .5)).join(" ")}" fill="none" stroke="${color}" stroke-width="${width}"/>`;
        }

        // green while rising, red while falling
        function trendLine(points, width, up, down) {
            let out = "";
            for (let k = 1; k < points.length; k++) {
                out += line([points[k - 1], points[k]], points[k][1] < points[k - 1][1] ? up : down, width);
            }
            return out;
        }

        function days(top, bottom) {
            return DAYS.map(i => `<path d="M${X(i) + .5} ${top}V${bottom}" stroke="#000" stroke-dasharray="3 3"/>`).join("");
        }

        function level(y) {
            return `<path d="M5 ${y}.5H4000" stroke="#c0c0c0" stroke-dasharray="3 3"/>`;
        }

        function label(x, y, text, color, anchor) {
            return `<text x="${x}" y="${y}" font-size="9" fill="${color || "#000"}" text-anchor="${anchor || "start"}">${text}</text>`;
        }

        function draw(id, left, top, content) {
            document.getElementById(id).innerHTML = `<g transform="translate(${-left},${-top})">${content}</g>`;
        }

        function drawPrice() {
            let s = `<path d="M1150 654L1381 399L1493 535ZM1486 535L1533 439L1669 781Z" fill="#ffe4e1" fill-rule="evenodd"/>`;
            s += `<path d="M1381 757H1629V775H1381Z" fill="#ffe4c4"/><path d="M1504 765h3v3h-3z" fill="#fff"/>`;
            s += `<path d="M0 747.5H4000" stroke="#c0c0c0"/>` + days(76, 799);
            candles.forEach(([h, l, o, c], i) => {
                const x = X(i), top = Y(Math.max(o, c)), bottom = Y(Math.min(o, c));
                s += `<path d="M${x + .5} ${Y(h)}V${Y(l) + 1}" stroke="#000"/>`;
                if (o === c) s += `<path d="M${x - 2} ${top + .5}h5" stroke="#000"/>`;
                else s += `<rect x="${x - 1.5}" y="${top + .5}" width="4" height="${bottom - top}" fill="${c > o ? "#fff" : "#000"}" stroke="#000"/>`;
            });
            s += trendLine(fast, 1, "#228b22", "#ff0000") + trendLine(slow, 2, "#228b22", "#ff0000");
            redSteps.forEach(p => s += line(pairs(p), "#ff0000", 2));
            blueSteps.forEach(p => s += line(pairs(p), "#0000ff", 2));
            s += `<path d="M1150 654L1173 399" stroke="#ff0000" stroke-width="2"/>`;
            fibo.forEach(([t, y]) => s += `<path d="M1149 ${y}.5H1387" stroke="#ff0000" stroke-dasharray="3 3"/>` + label(1388, y - 2, t, "#ff0000", "end"));
            [[1381, 775], [1629, 757], [1629, 775]].forEach(([x, y]) => s += `<rect x="${x - 1.5}" y="${y - 1.5}" width="4" height="4" fill="#fff" stroke="#ffe4c4"/>`);
            s += `<path d="M1685 74h9l-4.500 5z" fill="#c0c0c0"/><path d="M8 79h7l-3.500 4z"/>`;
            s += label(20, 85, "FPL20,M15&#160; 2404 2406 2404 2405");
            draw("price", 5, 74, s);

            let a = "";
            for (let p = 2479; p >= 2404; p -= 5) a += `<path d="M1880 ${Y(p)}.5h2" stroke="#000"/>` + label(1884, Y(p) + 3, p);
            a += `<path d="M1880 741h28v11h-28z"/>` + label(1884, 750, "2405", "#fff");
            draw("priceAxis", 1880, 73, a);
        }

        function drawWeis() {
            let s = days(802, 812) + label(9, 813, "WeisWave 57.0000 0.0000 0.0000 1.0000 1.0000 57.0000");
            waves.forEach((w, i) => {
                if (w[0] === "w") return;
                const h = Number(w[1]);
                s += `<rect x="${X(i) - 1}" y="${812 - h}" width="3" height="${h > 2 ? h - 1 : 1}" fill="${w[0].toLowerCase() === "r" ? "#ff0000" : "#0000ff"}"/>`;
            });
            draw("weis", 5, 802, s);
            draw("weisAxis", 1880, 801, label(1884, 808, "-29.65") + label(1882, 812, "57.9365"));
        }

        function drawVolume() {
            let s = days(815, 867) + label(9, 827, "Volumes 9");
            volumes.forEach((v, i) => {
                const h = Number(v.slice(1));
                s += `<rect x="${X(i) - 1}" y="${866 - h}" width="3" height="${h}" fill="${v[0] === "R" ? "#ff0000" : "#008000"}"/>`;
            });
            draw("volume", 5, 815, s);
            draw("volumeAxis", 1880, 814, label(1883, 825, "187") + label(1882, 864, "0"));
        }

        function drawStoch() {
            draw("stoch", 5, 870, level(880) + level(907) + days(870, 917) + line(pairs(stochMain), "#000", 2) + line(pairs(stochSignal), "#ff0000", 1) + label(9, 882, "Stoch(15,5,5) 4.5161 11.4896"));
            draw("stochAxis", 1880, 869, label(1882, 880, "100") + label(1882, 883, "80") + label(1882, 910, "20") + label(1882, 914, "0"));
        }

        function drawRsi() {
            draw("rsi", 5, 920, level(938) + level(961) + days(920, 978) + line(pairs(rsiLine), "#008000", 2) + label(9, 932, "RSI(13) 33.1453"));
            draw("rsiAxis", 1880, 919, label(1882, 930, "100") + label(1882, 941, "70") + label(1882, 964, "30") + label(1882, 976, "0"));
        }

        function drawTimes() {
            draw("timeAxis", 4, 980, times.map((t, k) => `<path d="M${5 + 64 * k}.5 980v3" stroke="#000"/>` + label(4 + 64 * k, 992, t)).join(""));
        }

        drawPrice();
        drawWeis();
        drawVolume();
        drawStoch();
        drawRsi();
        drawTimes();
    </script>
</body>
</html>
